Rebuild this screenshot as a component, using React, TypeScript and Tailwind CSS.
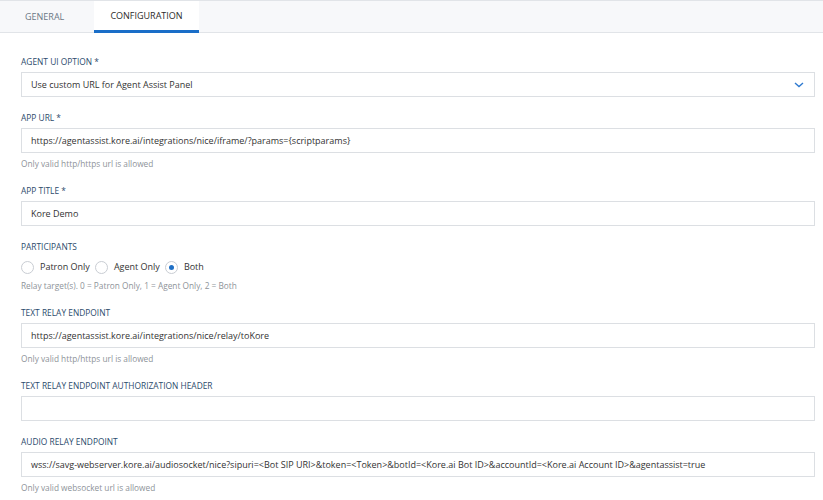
import React from 'react'

const font = { fontFamily: '"Open Sans", "Liberation Sans", sans-serif' }

function Label({ children }: { children: React.ReactNode }) {
  return <div className="text-[8.4px] leading-[12px] uppercase text-[#2c4b6c] mb-[4px]">{children}</div>
}

function Help({ children }: { children: React.ReactNode }) {
  return <div className="text-[8.3px] leading-[12px] text-[#8e9399] mt-[5px]">{children}</div>
}

function Box({ value }: { value: string }) {
  return (
    <div className="h-[25px] border border-[#dcdfe3] bg-white px-[9px] flex items-center text-[9px] text-[#333] whitespace-nowrap overflow-hidden">
      {value}
    </div>
  )
}

function Radio({ label, checked }: { label: string; checked?: boolean }) {
  return (
    <div className="flex items-center gap-[6px] mr-[5px]">
      <span className="w-[13px] h-[13px] rounded-full border border-[#c9cdd3] bg-white flex items-center justify-center">
        {checked && <span className="w-[5px] h-[5px] rounded-full bg-[#1f6fc5]" />}
      </span>
      <span className="text-[9px] text-[#333]">{label}</span>
    </div>
  )
}

export default function App() {
  return (
    <div className="w-[823px] h-[500px] bg-white overflow-hidden" style={font}>
      {/* tabs */}
      <div className="h-[33px] bg-[#f7f8fa] border-t border-b border-[#e1e4e8] flex">
        <div className="w-[94px] flex items-center pl-[25px] text-[9px] text-[#6b7785]">GENERAL</div>
        <div className="w-[105px] bg-white border-b-[3px] border-[#1a6ec8] -mb-px flex items-center justify-center text-[9px] text-[#2b2b2b]">
          CONFIGURATION
        </div>
      </div>

      <div className="pl-[21px] pr-[8px] pt-[23px]">
        <div className="mb-[15px]">
          <Label>Agent UI Option *</Label>
          <div className="h-[25px] border border-[#dcdfe3] bg-white px-[9px] flex items-center justify-between text-[9px] text-[#333]">
            <span>Use custom URL for Agent Assist Panel</span>
            <svg width="10" height="6" viewBox="0 0 10 6" className="mr-[1px]">
              <path d="M1 1l4 3.5L9 1" fill="none" stroke="#2f7ad0" strokeWidth="1.4" />
            </svg>
          </div>
        </div>

        <div className="mb-[15px]">
          <Label>App URL *</Label>
          <Box value="https://agentassist.kore.ai/integrations/nice/iframe/?params={scriptparams}" />
          <Help>Only valid http/https url is allowed</Help>
        </div>

        <div className="mb-[15px]">
          <Label>App Title *</Label>
          <Box value="Kore Demo" />
        </div>

        <div className="mb-[15px]">
          <Label>Participants</Label>
          <div className="h-[16px] flex items-center mt-[6px]">
            <Radio label="Patron Only" />
            <Radio label="Agent Only" />
            <Radio label="Both" checked />
          </div>
          <Help>Relay target(s). 0 = Patron Only, 1 = Agent Only, 2 = Both</Help>
        </div>

        <div className="mb-[15px]">
          <Label>Text Relay Endpoint</Label>
          <Box value="https://agentassist.kore.ai/integrations/nice/relay/toKore" />
          <Help>Only valid http/https url is allowed</Help>
        </div>

        <div className="mb-[15px]">
          <Label>Text Relay Endpoint Authorization Header</Label>
          <Box value="" />
        </div>

        <div>
          <Label>Audio Relay Endpoint</Label>
          <Box value="wss://savg-webserver.kore.ai/audiosocket/nice?sipuri=<Bot SIP URI>&token=<Token>&botId=<Kore.ai Bot ID>&accountId=<Kore.ai Account ID>&agentassist=true" />
          <Help>Only valid websocket url is allowed</Help>
        </div>
      </div>
    </div>
  )
}
